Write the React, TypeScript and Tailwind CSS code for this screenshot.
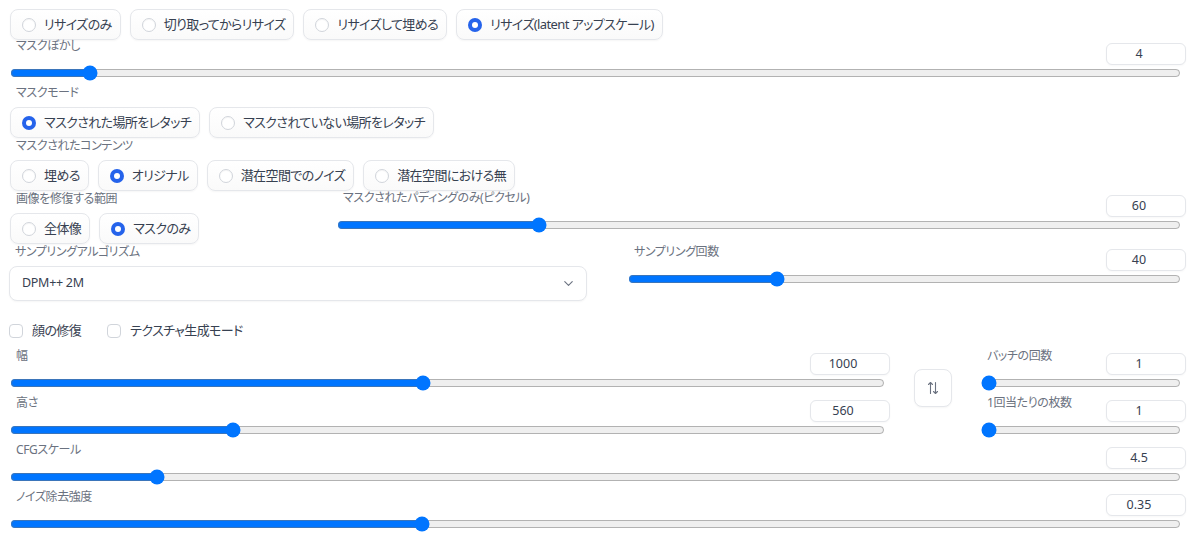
import { ChevronDown } from 'lucide-react'

const font = "font-['Noto_Sans','Noto_Sans_CJK_JP',sans-serif] [font-feature-settings:'palt']"

function Label({ children, className = '' }: { children: React.ReactNode; className?: string }) {
  return (
    <div className={`h-[16px] leading-[16px] pl-[6px] text-[12px] tracking-[-0.4px] text-[#6b7280] whitespace-nowrap ${className}`}>
      {children}
    </div>
  )
}

function NumberBox({ value, className = '' }: { value: string; className?: string }) {
  return (
    <div
      className={`w-[80px] h-[22px] rounded-[6px] border border-[#e5e7eb] bg-white flex items-center justify-center pr-[14px] text-[12.5px] text-[#374151] shadow-[0_1px_2px_rgba(0,0,0,0.03)] ${className}`}
    >
      {value}
    </div>
  )
}

function Range({ min, max, value, step = 1 }: { min: number; max: number; value: number; step?: number }) {
  return (
    <div className="h-[18px] flex items-center pr-[5px]">
      <input
        type="range"
        min={min}
        max={max}
        step={step}
        defaultValue={value}
        className="w-full h-[16px] accent-[#0075ff]"
      />
    </div>
  )
}

function SliderBlock({
  label,
  value,
  min,
  max,
  step,
  num,
}: {
  label: string
  value: number
  min: number
  max: number
  step?: number
  num: string
}) {
  return (
    <div className="flex flex-col pb-[3px]">
      <div className="flex justify-between items-start h-[26px]">
        <Label>{label}</Label>
        <NumberBox value={num} className="mt-[5px]" />
      </div>
      <Range min={min} max={max} value={value} step={step} />
    </div>
  )
}

function RadioGroup({ label, options, selected }: { label: string; options: string[]; selected: number }) {
  return (
    <div className="flex flex-col">
      <Label>{label}</Label>
      <div className="flex gap-[9px] mt-[6px]">
        {options.map((o, i) => (
          <div
            key={o}
            className="h-[31px] flex items-center gap-[8px] pl-[11px] pr-[8px] rounded-[8px] border border-[#e5e7eb] bg-gradient-to-b from-white to-[#fafafa] shadow-[0_1px_2px_rgba(0,0,0,0.04)] text-[13px] tracking-[-0.6px] text-[#374151] whitespace-nowrap"
          >
            {i === selected ? (
              <span className="w-[14px] h-[14px] shrink-0 rounded-full bg-[#2563eb] flex items-center justify-center">
                <span className="w-[6px] h-[6px] rounded-full bg-white" />
              </span>
            ) : (
              <span className="w-[14px] h-[14px] shrink-0 rounded-full border border-[#d1d5db] bg-white shadow-[inset_0_1px_1px_rgba(0,0,0,0.04)]" />
            )}
            {o}
          </div>
        ))}
      </div>
    </div>
  )
}

function Check({ label }: { label: string }) {
  return (
    <div className="flex items-center gap-[9px] text-[13px] tracking-[-0.6px] text-[#374151] whitespace-nowrap">
      <span className="w-[14px] h-[14px] rounded-[4px] border border-[#d1d5db] bg-white" />
      {label}
    </div>
  )
}

export default function App() {
  return (
    <div className={`w-[1200px] h-[537px] overflow-hidden bg-white pl-[10px] pr-[14px] ${font}`}>
      <div className="mt-[-13px]">
        <RadioGroup
          label="リサイズモード"
          options={['リサイズのみ', '切り取ってからリサイズ', 'リサイズして埋める', 'リサイズ(latent アップスケール)']}
          selected={3}
        />
      </div>

      <div className="mt-[-2px]">
        <SliderBlock label="マスクぼかし" min={0} max={64} value={4} num="4" />
      </div>

      <RadioGroup label="マスクモード" options={['マスクされた場所をレタッチ', 'マスクされていない場所をレタッチ']} selected={0} />

      <RadioGroup
        label="マスクされたコンテンツ"
        options={['埋める', 'オリジナル', '潜在空間でのノイズ', '潜在空間における無']}
        selected={1}
      />

      {/* 修復範囲 + パディング */}
      <div className="flex">
        <div className="w-[327px]">
          <RadioGroup label="画像を修復する範囲" options={['全体像', 'マスクのみ']} selected={1} />
        </div>
        <div className="flex-1 mt-[-1px]">
          <SliderBlock label="マスクされたパディングのみ(ピクセル)" min={0} max={256} value={60} num="60" />
        </div>
      </div>

      {/* サンプリング */}
      <div className="flex">
        <div className="w-[578px] ml-[-1px] flex flex-col">
          <Label>サンプリングアルゴリズム</Label>
          <div className="mt-[6px] h-[35px] rounded-[8px] border border-[#e5e7eb] bg-white shadow-[0_1px_2px_rgba(0,0,0,0.04)] flex items-center justify-between pl-[12px] pr-[10px] text-[12.5px] tracking-[-0.3px] text-[#374151]">
            <span>DPM++ 2M</span>
            <ChevronDown className="w-[15px] h-[15px] text-[#6b7280]" strokeWidth={1.8} />
          </div>
        </div>
        <div className="flex-1 ml-[41px]">
          <SliderBlock label="サンプリング回数" min={1} max={150} value={40} num="40" />
        </div>
      </div>

      {/* チェックボックス */}
      <div className="flex items-center gap-[26px] mt-[22px] h-[16px] ml-[-1px]">
        <Check label="顔の修復" />
        <Check label="テクスチャ生成モード" />
      </div>

      {/* 幅・高さ・バッチ */}
      <div className="flex mt-[9px]">
        <div className="w-[880px] flex flex-col">
          <SliderBlock label="幅" min={64} max={2048} value={1000} num="1000" />
          <SliderBlock label="高さ" min={64} max={2048} value={560} num="560" />
        </div>
        <div className="ml-[24px] mt-[21px] w-[38px] h-[38px] rounded-[8px] border border-[#e5e7eb] bg-white shadow-[0_1px_2px_rgba(0,0,0,0.04)] flex items-center justify-center">
          <svg width="12" height="14" viewBox="0 0 12 14" fill="none" stroke="#6b7280" strokeWidth="1.1" strokeLinecap="round" strokeLinejoin="round">
            <path d="M3.5 12.5V1.5M1.5 3.5L3.5 1.5l2 2" />
            <path d="M8.5 1.5v11M6.5 10.5L8.5 12.5l2-2" />
          </svg>
        </div>
        <div className="ml-[29px] flex-1 flex flex-col">
          <SliderBlock label="バッチの回数" min={1} max={100} value={1} num="1" />
          <SliderBlock label="1回当たりの枚数" min={1} max={8} value={1} num="1" />
        </div>
      </div>

      <SliderBlock label="CFGスケール" min={1} max={30} step={0.5} value={4.5} num="4.5" />
      <SliderBlock label="ノイズ除去強度" min={0} max={1} step={0.01} value={0.35} num="0.35" />
    </div>
  )
}
